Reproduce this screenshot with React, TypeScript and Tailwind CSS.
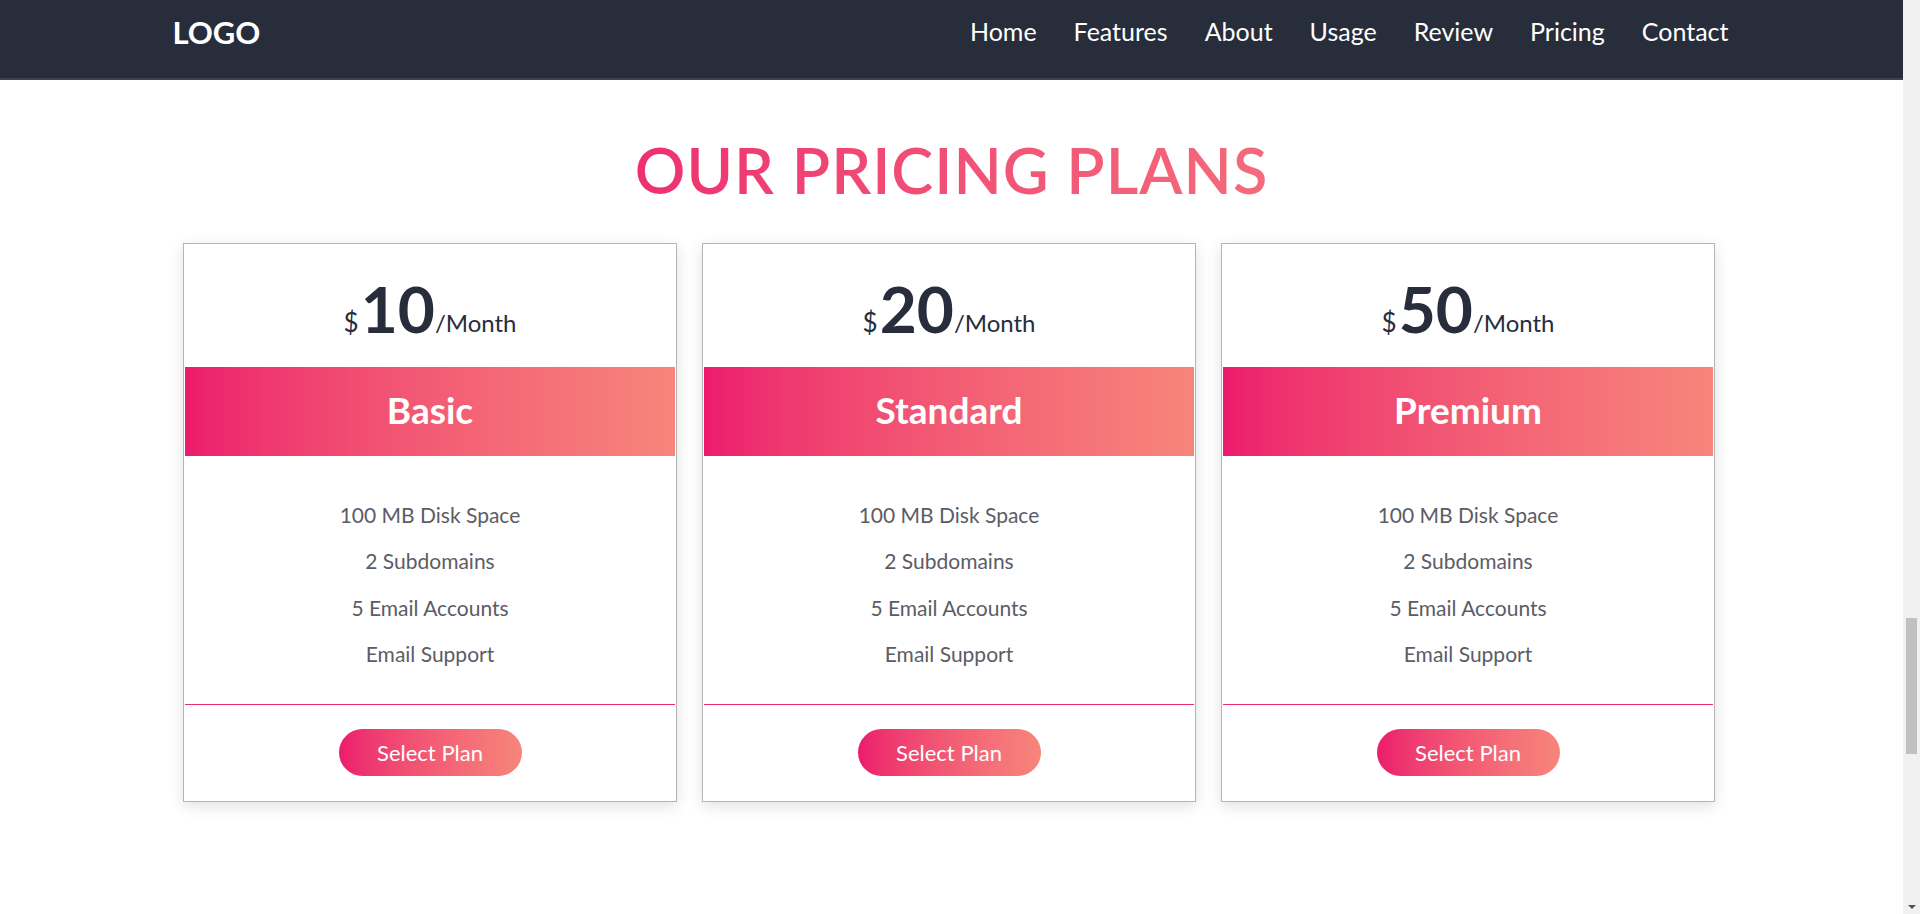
const navLinks = ['Home', 'Features', 'About', 'Usage', 'Review', 'Pricing', 'Contact'];

const plans = [
  { price: '10', name: 'Basic' },
  { price: '20', name: 'Standard' },
  { price: '50', name: 'Premium' },
];

const features = ['100 MB Disk Space', '2 Subdomains', '5 Email Accounts', 'Email Support'];

function PlanCard({ price, name }: { price: string; name: string }) {
  return (
    <div className="bg-white border border-[#b4b4b4] shadow-[0_4px_14px_rgba(0,0,0,0.12)] flex flex-col">
      <div className="h-[123px] flex items-end justify-center pb-[32px] text-[#272d3b]">
        <span className="text-[26px] leading-none mr-[2px]">$</span>
        <span className="text-[64px] font-bold leading-[0.8]">{price}</span>
        <span className="text-[24px] leading-none">/Month</span>
      </div>
      <div className="mx-px h-[89px] flex items-center justify-center bg-linear-to-r from-[#ec1a6d] to-[#f7857b]">
        <h3 className="text-white text-[37px] font-bold -mt-[3px]">{name}</h3>
      </div>
      <ul className="h-[248px] flex flex-col items-center justify-center pt-[10px] text-[21px] leading-[46.5px] text-[#5c5c66]">
        {features.map((f) => (
          <li key={f}>{f}</li>
        ))}
      </ul>
      <div className="mx-px h-px bg-[#ef2a75]" />
      <div className="flex justify-center py-[25px]">
        <button className="w-[183px] h-[47px] rounded-full bg-linear-to-r from-[#ec1a6d] to-[#f7857b] text-white text-[22px] -mt-px">
          Select Plan
        </button>
      </div>
    </div>
  );
}

export default function App() {
  return (
    <div className="h-screen flex bg-white font-['Lato','Noto_Sans',sans-serif] overflow-hidden">
      <div className="flex-1">
        <nav className="h-[80px] bg-[#272d3b] border-b-2 border-[#3e4251]">
          <div className="w-[1558px] mx-auto h-[78px] flex items-center pb-[14px]">
            <a className="text-white text-[31px] font-bold">LOGO</a>
            <ul className="ml-auto flex gap-[37px] text-white text-[25px] mr-[2px]">
              {navLinks.map((l) => (
                <li key={l}>{l}</li>
              ))}
            </ul>
          </div>
        </nav>

        <section className="pt-[52px] pb-[112px]">
          <h2 className="text-center text-[63px] font-semibold leading-[1.2] tracking-[1px]">
            <span className="bg-linear-to-r from-[#ee2f71] to-[#f46a7b] bg-clip-text text-transparent">
              OUR PRICING PLANS
            </span>
          </h2>
          <div className="w-[1532px] ml-[183px] mt-[35px] grid grid-cols-3 gap-[25px]">
            {plans.map((p) => (
              <PlanCard key={p.name} price={p.price} name={p.name} />
            ))}
          </div>
        </section>
      </div>

      {/* page scrollbar, scrolled near the bottom */}
      <div className="w-[17px] bg-[#f1f1f1] flex flex-col items-center">
        <div className="h-[618px]" />
        <div className="w-[11px] h-[136px] bg-[#c1c1c1]" />
        <div className="flex-1" />
        <div className="mb-[5px] w-0 h-0 border-l-[4px] border-r-[4px] border-t-[4px] border-l-transparent border-r-transparent border-t-[#505050]" />
      </div>
    </div>
  );
}
